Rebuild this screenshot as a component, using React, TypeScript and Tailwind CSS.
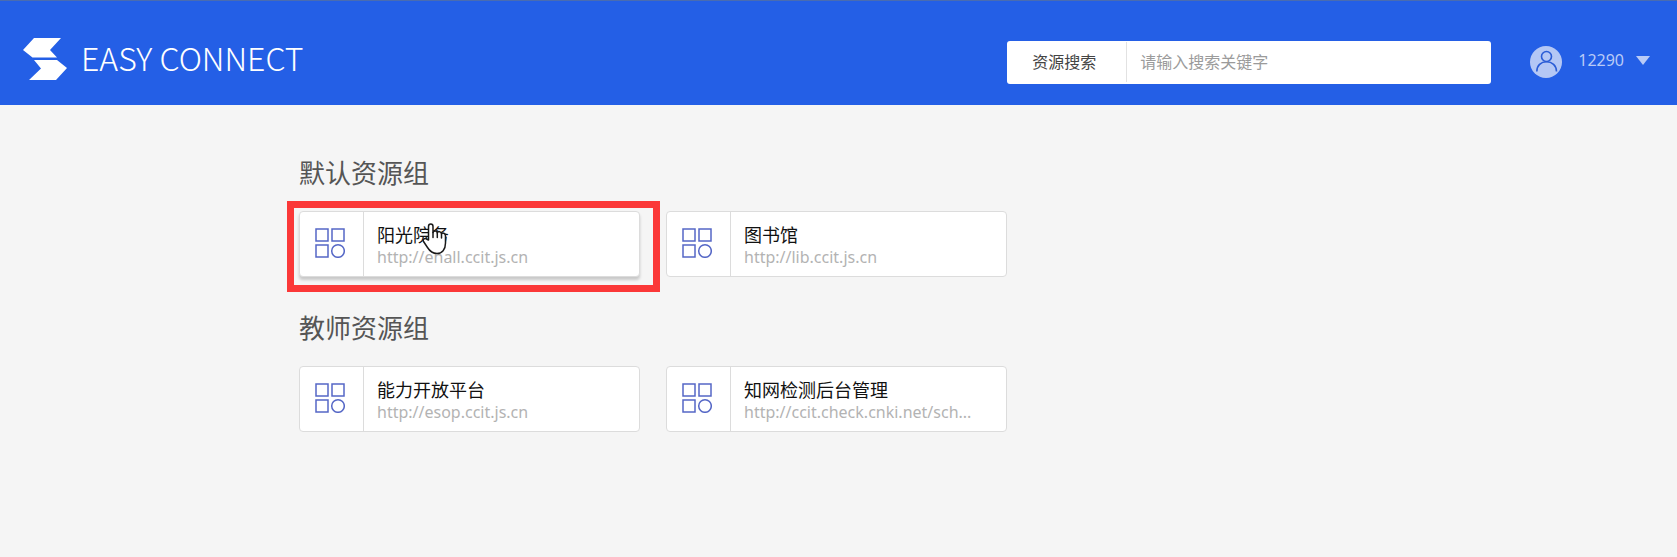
import { clsx } from 'clsx';

interface Resource {
  name: string;
  url: string;
  active?: boolean;
}

interface ResourceGroup {
  title: string;
  resources: Resource[];
}

const groups: ResourceGroup[] = [
  {
    title: '默认资源组',
    resources: [
      { name: '阳光院务', url: 'http://ehall.ccit.js.cn', active: true },
      { name: '图书馆', url: 'http://lib.ccit.js.cn' },
    ],
  },
  {
    title: '教师资源组',
    resources: [
      { name: '能力开放平台', url: 'http://esop.ccit.js.cn' },
      { name: '知网检测后台管理', url: 'http://ccit.check.cnki.net/sch...' },
    ],
  },
];

function Logo() {
  return (
    <a href="#" className="flex items-center gap-[14px] text-white">
      <svg width="44" height="42" viewBox="0 0 44 42" fill="currentColor" aria-hidden="true">
        <path d="M11 0H38L27 12L34 19.5H9.500L0 12Z" />
        <path d="M11 22H34L44 30L33 42H6L18 30.500Z" />
      </svg>
      <span className="pb-1 font-['Noto_Sans_CJK_SC',sans-serif] text-[32px] leading-[38px] font-light whitespace-nowrap">
        EASY CONNECT
      </span>
    </a>
  );
}

function SearchBar() {
  return (
    <form className="flex h-[43px] w-[484px] items-center rounded-[3px] bg-white text-base">
      <label htmlFor="keyword" className="w-[119px] shrink-0 pl-[25px] text-[#444]">
        资源搜索
      </label>
      <input
        id="keyword"
        type="text"
        placeholder="请输入搜索关键字"
        className="h-10 min-w-0 flex-1 border-l border-[#e2e2e2] px-[13px] outline-none placeholder:text-[#9b9b9b]"
      />
    </form>
  );
}

function UserMenu() {
  return (
    <button type="button" className="flex items-center gap-4 text-base text-[#b9cbf7]">
      <svg width="32" height="32" viewBox="0 0 32 32" fill="none" aria-hidden="true">
        <circle cx="16" cy="16" r="16" fill="#b4c7f5" />
        <g stroke="#2a5cd6" strokeWidth="1.6">
          <circle cx="16.500" cy="10.500" r="5" />
          <path d="M6.800 25.500C6.800 19.500 11 15.800 16.500 15.800S26.500 19.500 26.500 25.500" />
        </g>
      </svg>
      <span className="flex items-center gap-3 pb-1">
        12290
        <svg width="14" height="9" viewBox="0 0 14 9" fill="currentColor" aria-hidden="true">
          <path d="M0 0H14L7 9Z" />
        </svg>
      </span>
    </button>
  );
}

function AppsIcon() {
  return (
    <svg width="30" height="30" viewBox="0 0 30 30" fill="none" stroke="#5567c6" strokeWidth="1.5" aria-hidden="true">
      <rect x="1" y="1" width="12" height="12" />
      <rect x="17" y="1" width="12" height="12" />
      <rect x="1" y="17" width="12" height="12" />
      <circle cx="23" cy="23" r="6.300" />
    </svg>
  );
}

function HandCursor() {
  return (
    <svg
      className="absolute top-[12px] left-[123px]"
      width="25"
      height="32"
      viewBox="0 0 25 32"
      fill="#fff"
      stroke="#1a1a1a"
      strokeWidth="1.5"
      strokeLinejoin="round"
      strokeLinecap="round"
      aria-hidden="true"
    >
      <path d="M6.500 17V3.500C6.500 .3 11 .3 11 3.500V9.500C11.500 7.300 15 7.300 15.300 9.800C16 8 19.300 8.200 19.500 10.800C20.500 9.500 23.500 10 23.500 13V20C23.500 26.500 20 30.500 15 30.500C10.500 30.500 8 28.500 5.500 24.500L1.500 18.500C.3 16.300 3 14.600 4.800 16.200Z" />
      <path d="M11 9.500V14.500M15.300 9.800V14.500M19.500 10.800V15" />
    </svg>
  );
}

function ResourceCard({ name, url, active }: Resource) {
  return (
    <div className="relative w-[341px]">
      <a
        href={url}
        className={clsx(
          'flex h-[66px] items-stretch rounded border border-[#dcdcdc] bg-white',
          active && 'shadow-[0_3px_3px_rgba(0,0,0,0.18)]',
        )}
      >
        <span className="flex w-[64px] shrink-0 items-center justify-center border-r border-[#dcdcdc] pr-[3px] pb-[2px]">
          <AppsIcon />
        </span>
        <span className="flex min-w-0 flex-1 flex-col justify-center pt-1 pr-5 pl-[13px]">
          <span className="truncate text-lg leading-[22px] text-[#111]">{name}</span>
          <span className="truncate text-base leading-[22px] text-[#b3b3b3]">{url}</span>
        </span>
      </a>
      {active && (
        <>
          <HandCursor />
          <div className="pointer-events-none absolute -top-[10px] -right-5 -bottom-[15px] -left-3 border-[7px] border-[#fb3838]" />
        </>
      )}
    </div>
  );
}

export default function App() {
  return (
    <div className="min-h-screen bg-[#f5f5f5] font-['Noto_Sans','Noto_Sans_CJK_SC',sans-serif]">
      <header className="flex h-[105px] items-center justify-between border-t border-[#4a6cb0] bg-[#245fe6] pr-[27px] pl-[23px]">
        <div className="pt-3">
          <Logo />
        </div>
        <div className="flex items-center gap-[39px] pt-[18px]">
          <SearchBar />
          <UserMenu />
        </div>
      </header>

      <main className="mx-auto flex max-w-[1079px] flex-col gap-[31px] pt-12 pb-10">
        {groups.map((group) => (
          <section key={group.title}>
            <h2 className="mb-[18px] text-[26px] leading-10 text-[#555]">{group.title}</h2>
            <div className="flex flex-wrap gap-[26px]">
              {group.resources.map((resource) => (
                <ResourceCard key={resource.url} {...resource} />
              ))}
            </div>
          </section>
        ))}
      </main>
    </div>
  );
}
